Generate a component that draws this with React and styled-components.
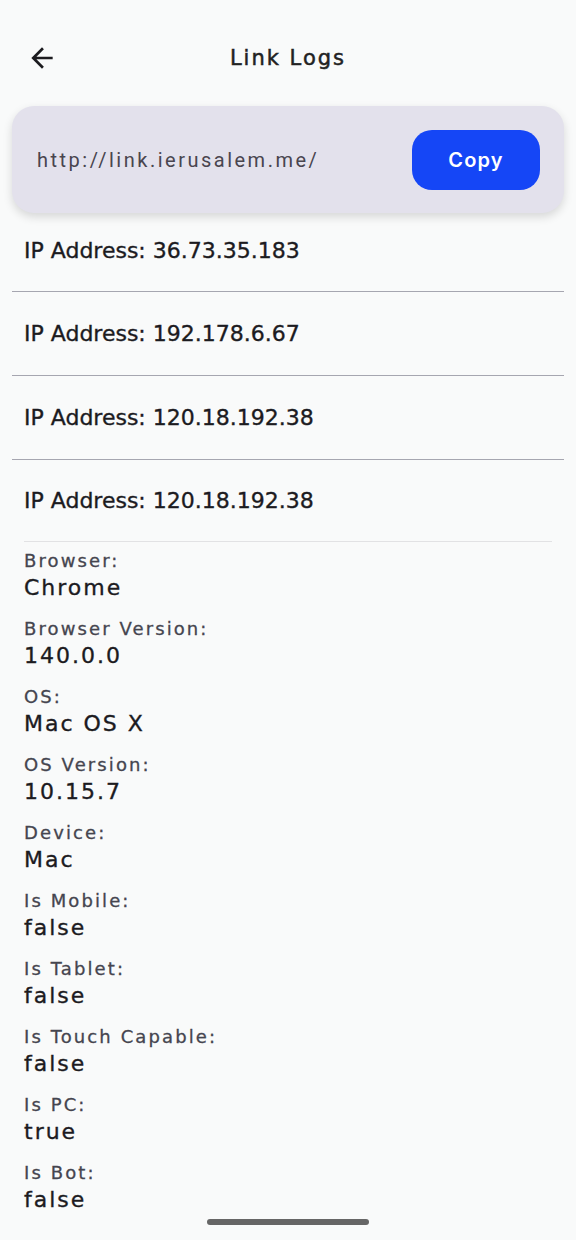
import React from 'react';
import styled, { createGlobalStyle } from 'styled-components';

const GlobalStyle = createGlobalStyle`
  body {
    margin: 0;
    background: #f9fafa;
    font-family: "DejaVu Sans", "Noto Sans", sans-serif;
    color: #1c1b1f;
  }
`;

const Page = styled.div`
  position: relative;
  width: 576px;
  height: 1240px;
  overflow: hidden;
  display: flex;
  flex-direction: column;
`;

const Header = styled.header`
  margin-top: 36px;
  height: 44px;
  display: flex;
  align-items: center;
  justify-content: center;
  position: relative;
`;

const BackButton = styled.button`
  position: absolute;
  left: 26px;
  top: 6px;
  width: 32px;
  height: 32px;
  padding: 0;
  border: none;
  background: none;
  color: #1c1b1f;
  display: flex;
`;

const Title = styled.h1`
  margin: 0;
  font-size: 21px;
  font-weight: 400;
  letter-spacing: 2px;
  -webkit-text-stroke: 0.5px #222;
  color: #222;
`;

const LinkCard = styled.div`
  margin: 26px 12px 0;
  height: 107px;
  box-sizing: border-box;
  padding: 0 24px 0 25px;
  border-radius: 22px;
  background: #e3e1ec;
  box-shadow: 0 4px 10px rgba(0, 0, 0, 0.14);
  display: flex;
  align-items: center;
  justify-content: space-between;
  position: relative;
  z-index: 1;
`;

const Url = styled.span`
  font-family: Roboto, sans-serif;
  font-size: 20px;
  letter-spacing: 2.5px;
  color: #49454f;
`;

const CopyButton = styled.button`
  width: 128px;
  height: 60px;
  border: none;
  border-radius: 20px;
  background: #1546f6;
  color: #fff;
  font-family: Inter, sans-serif;
  font-size: 20px;
  font-weight: 600;
  letter-spacing: 1.2px;
`;

const List = styled.div`
  margin: 0 12px;
  display: flex;
  flex-direction: column;
`;

const Row = styled.div`
  height: ${(p) => p.$height}px;
  box-sizing: border-box;
  padding: 0 12px ${(p) => p.$padBottom || 0}px;
  display: flex;
  align-items: center;
  border-bottom: ${(p) => (p.$open ? 'none' : '1px solid #a6a6b0')};
  font-size: 22px;
  color: #1c1b1f;
  -webkit-text-stroke: 0.35px #1c1b1f;
`;

const Details = styled.div`
  margin: 0 12px;
  border-top: 1px solid #e2e2e4;
  padding-top: 7px;
  display: flex;
  flex-direction: column;
  gap: 14px;
`;

const Field = styled.div`
  display: flex;
  flex-direction: column;
`;

const Label = styled.span`
  font-size: 18px;
  line-height: 24px;
  letter-spacing: 2.1px;
  color: #45454f;
  -webkit-text-stroke: 0.3px #45454f;
`;

const Value = styled.span`
  font-size: 22px;
  line-height: 30px;
  letter-spacing: 2px;
  color: #1c1b1f;
  -webkit-text-stroke: 0.35px #1c1b1f;
`;

const HomeBar = styled.div`
  position: absolute;
  left: 207px;
  bottom: 15px;
  width: 162px;
  height: 6px;
  border-radius: 3px;
  background: #666;
`;

const logs = [
  { ip: '36.73.35.183', height: 79, padBottom: 4 },
  { ip: '192.178.6.67', height: 84 },
  { ip: '120.18.192.38', height: 84 },
  { ip: '120.18.192.38', height: 81, open: true },
];

const details = [
  ['Browser', 'Chrome'],
  ['Browser Version', '140.0.0'],
  ['OS', 'Mac OS X'],
  ['OS Version', '10.15.7'],
  ['Device', 'Mac'],
  ['Is Mobile', 'false'],
  ['Is Tablet', 'false'],
  ['Is Touch Capable', 'false'],
  ['Is PC', 'true'],
  ['Is Bot', 'false'],
];

const App = () => (
  <Page>
    <GlobalStyle />
    <Header>
      <BackButton aria-label="Back">
        <svg width="32" height="32" viewBox="0 0 24 24" fill="currentColor">
          <path d="M20 11H7.83l5.59-5.59L12 4l-8 8 8 8 1.41-1.41L7.83 13H20v-2z" />
        </svg>
      </BackButton>
      <Title>Link Logs</Title>
    </Header>
    <LinkCard>
      <Url>http://link.ierusalem.me/</Url>
      <CopyButton>Copy</CopyButton>
    </LinkCard>
    <List>
      {logs.map((log, i) => (
        <React.Fragment key={i}>
          <Row $height={log.height} $padBottom={log.padBottom} $open={log.open}>
            IP Address: {log.ip}
          </Row>
          {log.open && (
            <Details>
              {details.map(([label, value]) => (
                <Field key={label}>
                  <Label>{label}:</Label>
                  <Value>{value}</Value>
                </Field>
              ))}
            </Details>
          )}
        </React.Fragment>
      ))}
    </List>
    <HomeBar />
  </Page>
);

export default App;
